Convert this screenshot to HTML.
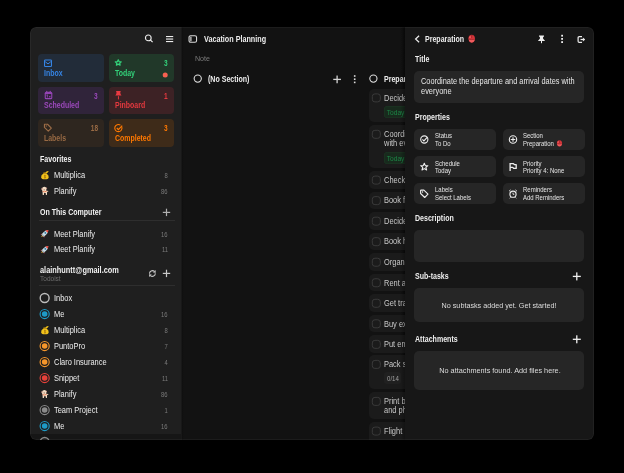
<!DOCTYPE html><html><head><meta charset="utf-8"><style>
html,body{margin:0;padding:0;background:#000;width:624px;height:473px;overflow:hidden}
.t{position:absolute;font-family:"Liberation Sans",sans-serif;line-height:1;white-space:nowrap}
.r{position:absolute}
#wrap{will-change:transform}
#win{position:absolute;left:30px;top:27px;width:564px;height:413px;border-radius:6px;overflow:hidden;background:#121212}
</style></head><body><div id="wrap" style="position:absolute;left:0;top:0;width:624px;height:473px;clip-path:inset(27px 30px 33px 30px round 6px)">

<div class="r" style="left:30.00px;top:27.00px;width:564.00px;height:413.00px;background:#121212;border-radius:6px;overflow:hidden"></div>
<div class="r" style="left:30.00px;top:27.00px;width:150.50px;height:413.00px;background:#1f1f1f;border-radius:0px;border-radius:6px 0 0 6px"></div>
<div class="r" style="left:180.50px;top:27.00px;width:1.50px;height:413.00px;background:#181818;border-radius:0px;"></div>
<div class="r" style="left:182.00px;top:27.00px;width:1.50px;height:413.00px;background:linear-gradient(90deg,#0f0f0f,#121212);border-radius:0px;"></div>
<div class="r" style="left:405.00px;top:27.00px;width:189.00px;height:413.00px;background:#171717;border-radius:0px;border-radius:0 6px 6px 0"></div>
<div class="r" style="left:401.00px;top:27.00px;width:4.00px;height:413.00px;background:linear-gradient(90deg,rgba(0,0,0,0),rgba(0,0,0,0.35));border-radius:0px;"></div>
<svg class="r" style="left:144px;top:34px;overflow:visible" width="11" height="11" viewBox="0.000 0.000 11.000 11.000"><circle cx="4.3" cy="3.9" r="2.85" fill="none" stroke="#eee" stroke-width="1.1"/><line x1="6.3" y1="5.9" x2="8.6" y2="8.2" stroke="#eee" stroke-width="1.2"/></svg>
<svg class="r" style="left:166px;top:35px;overflow:visible" width="9" height="9" viewBox="0.000 0.000 9.000 9.000"><rect x="0" y="1" width="7.2" height="1.1" fill="#eee"/><rect x="0" y="3.5" width="7.2" height="1.1" fill="#eee"/><rect x="0" y="6" width="7.2" height="1.1" fill="#eee"/></svg>
<div class="r" style="left:38.00px;top:54.00px;width:65.50px;height:27.50px;background:#222c39;border-radius:4px;"></div>
<div class="t" style="left:44.20px;top:69.86px;font-size:8.2px;font-weight:700;color:#3584e4;letter-spacing:0px;transform:scaleX(0.85);transform-origin:0 0;">Inbox</div>
<div class="r" style="left:108.50px;top:54.00px;width:65.50px;height:27.50px;background:#213829;border-radius:4px;"></div>
<div class="t" style="left:114.70px;top:69.86px;font-size:8.2px;font-weight:700;color:#33d17a;letter-spacing:0px;transform:scaleX(0.85);transform-origin:0 0;">Today</div>
<div class="t" style="right:456.50px;top:60.06px;font-size:8.2px;font-weight:700;color:#33d17a;letter-spacing:0px;transform:scaleX(0.8);transform-origin:100% 0;">3</div>
<svg class="r" style="left:162px;top:72px;overflow:visible" width="7" height="7" viewBox="-0.700 -0.400 7.000 7.000"><circle cx="2.5" cy="2.5" r="2.5" fill="#f66151"/></svg>
<div class="r" style="left:38.00px;top:86.50px;width:65.50px;height:27.50px;background:#30243a;border-radius:4px;"></div>
<div class="t" style="left:44.20px;top:102.36px;font-size:8.2px;font-weight:700;color:#9a48ba;letter-spacing:0px;transform:scaleX(0.85);transform-origin:0 0;">Scheduled</div>
<div class="t" style="right:526.40px;top:92.56px;font-size:8.2px;font-weight:700;color:#9a48ba;letter-spacing:0px;transform:scaleX(0.8);transform-origin:100% 0;">3</div>
<div class="r" style="left:108.50px;top:86.50px;width:65.50px;height:27.50px;background:#3d2225;border-radius:4px;"></div>
<div class="t" style="left:114.70px;top:102.36px;font-size:8.2px;font-weight:700;color:#e5393f;letter-spacing:0px;transform:scaleX(0.85);transform-origin:0 0;">Pinboard</div>
<div class="t" style="right:456.50px;top:92.56px;font-size:8.2px;font-weight:700;color:#e5393f;letter-spacing:0px;transform:scaleX(0.8);transform-origin:100% 0;">1</div>
<div class="r" style="left:38.00px;top:119.00px;width:65.50px;height:27.50px;background:#2e261f;border-radius:4px;"></div>
<div class="t" style="left:44.20px;top:134.86px;font-size:8.2px;font-weight:700;color:#986a44;letter-spacing:0px;transform:scaleX(0.85);transform-origin:0 0;">Labels</div>
<div class="t" style="right:526.40px;top:125.06px;font-size:8.2px;font-weight:700;color:#986a44;letter-spacing:0px;transform:scaleX(0.8);transform-origin:100% 0;">18</div>
<div class="r" style="left:108.50px;top:119.00px;width:65.50px;height:27.50px;background:#3e2b19;border-radius:4px;"></div>
<div class="t" style="left:114.70px;top:134.86px;font-size:8.2px;font-weight:700;color:#ff7800;letter-spacing:0px;transform:scaleX(0.85);transform-origin:0 0;">Completed</div>
<div class="t" style="right:456.50px;top:125.06px;font-size:8.2px;font-weight:700;color:#ff7800;letter-spacing:0px;transform:scaleX(0.8);transform-origin:100% 0;">3</div>
<svg class="r" style="left:44px;top:59px;overflow:visible" width="9" height="9" viewBox="0.000 -0.500 9.000 9.000"><rect x="0.55" y="0.55" width="6.9" height="6.4" rx="0.8" fill="none" stroke="#3584e4" stroke-width="1.1"/><path d="M1.2 2.2 L4 4.4 L6.8 2.2" fill="none" stroke="#3584e4" stroke-width="1"/></svg>
<svg class="r" style="left:114px;top:58px;overflow:visible" width="10" height="10" viewBox="-0.400 -0.900 10.000 10.000"><path d="M3.85 0.9 L4.75 2.75 L6.8 2.95 L5.25 4.3 L5.7 6.3 L3.85 5.25 L2 6.3 L2.45 4.3 L0.9 2.95 L2.95 2.75 Z" fill="none" stroke="#33d17a" stroke-width="1.25" stroke-linejoin="round"/></svg>
<svg class="r" style="left:44px;top:90px;overflow:visible" width="10" height="11" viewBox="-0.500 -0.800 10.000 11.000"><rect x="0.2" y="0.9" width="7.6" height="7.5" rx="1.5" fill="#9444b4"/><rect x="1.3" y="3.2" width="5.4" height="4.1" rx="0.4" fill="#30243a"/><rect x="1.9" y="3.8" width="1.6" height="0.9" fill="#9444b4"/><rect x="2.4" y="4.5" width="0.8" height="2.2" fill="#9444b4"/><circle cx="5.3" cy="6" r="0.8" fill="#9444b4"/><rect x="1.7" y="0" width="1.1" height="1.6" rx="0.4" fill="#9444b4"/><rect x="5.2" y="0" width="1.1" height="1.6" rx="0.4" fill="#9444b4"/></svg>
<svg class="r" style="left:114px;top:90px;overflow:visible" width="9" height="11" viewBox="-0.900 -0.700 9.000 11.000"><path d="M1.1 0.3 H5.9 L5.4 1.6 Q5.2 3.2 6.6 4.9 H0.4 Q1.8 3.2 1.6 1.6 Z" fill="#ea3a42"/><rect x="3.05" y="5.5" width="0.95" height="3.2" fill="#ea3a42"/></svg>
<svg class="r" style="left:43px;top:123px;overflow:visible" width="11" height="10" viewBox="-0.750 -0.429 11.786 10.714"><path d="M0.8 1.2 V4.3 L4.9 8.3 L8.2 5 L4.1 0.9 H1.1 Z" fill="none" stroke="#9c6c46" stroke-width="1.2" stroke-linejoin="round"/><circle cx="2.7" cy="2.8" r="0.7" fill="#9c6c46"/></svg>
<svg class="r" style="left:114px;top:123px;overflow:visible" width="11" height="11" viewBox="-0.200 -0.800 11.000 11.000"><path d="M7.6 3.2 A3.6 3.6 0 1 1 6.2 1.3" fill="none" stroke="#ff7800" stroke-width="1.1"/><path d="M2.6 4.2 L4.2 5.8 L8 1.8" fill="none" stroke="#ff7800" stroke-width="1.2"/></svg>
<div class="t" style="left:39.60px;top:155.86px;font-size:8.2px;font-weight:700;color:#f2f2f2;letter-spacing:0px;transform:scaleX(0.86);transform-origin:0 0;">Favorites</div>
<svg class="r" style="left:40px;top:170px;overflow:visible" width="11" height="11" viewBox="-0.500 -0.500 11.000 11.000"><path d="M2.9 2.9 Q0.3 4.6 0.6 6.9 Q1 8.8 4.4 8.8 Q7.9 8.8 8.2 6.9 Q8.5 4.6 5.9 2.9 Z" fill="#f1c21b"/><path d="M3.1 3.2 L2.9 2.1 Q4.4 1.7 5.9 2.1 L5.7 3.2 Z" fill="#d9a30e"/><path d="M4.9 2.3 Q5.8 0.1 8.2 0.5 Q7.4 2.1 6.1 2.9 Z" fill="#f1c21b"/><path d="M4.4 4.3 V8 M3.6 5.2 Q4.4 4.6 5.2 5.2 Q3.6 6.2 5.2 7.1 Q4.4 7.7 3.6 7.1" fill="none" stroke="#9a6a0c" stroke-width="0.6"/></svg>
<div class="t" style="left:54.30px;top:171.86px;font-size:8.2px;font-weight:400;color:#eeeeee;letter-spacing:0px;transform:scaleX(0.91);transform-origin:0 0;">Multiplica</div>
<div class="t" style="right:456.00px;top:172.88px;font-size:6.8px;font-weight:400;color:#7a7a7a;letter-spacing:0px;transform:scaleX(0.86);transform-origin:100% 0;">8</div>
<svg class="r" style="left:40px;top:186px;overflow:visible" width="11" height="11" viewBox="-0.500 -0.300 11.000 11.000"><path d="M1.6 2.2 Q2 0.4 4 0.5 Q5.8 0.6 6 2.4 L5.6 4.4 Q7.4 4.2 8.2 4.8 Q7.6 5.6 6.6 5.6 L6.4 8.6 H5.4 L5.2 6.8 H3.6 L3.4 8.6 H2.2 L2 5 Q1.2 4 1.6 2.2 Z" fill="#f2dcc4"/><path d="M1.7 1.2 Q0.6 1.6 0.9 3.6 Q1.4 3.8 2.2 2.6 Z M5.4 0.9 Q6.6 1 6.7 2.8 L5.6 2.4 Z" fill="#d8a08f"/><path d="M3.2 2.6 L4.6 3.6 L3.4 4.2 Z" fill="#8a5a44"/><path d="M2.2 5.1 Q4 6.2 6.2 4.8" fill="none" stroke="#e8744c" stroke-width="0.9"/></svg>
<div class="t" style="left:54.30px;top:187.86px;font-size:8.2px;font-weight:400;color:#eeeeee;letter-spacing:0px;transform:scaleX(0.91);transform-origin:0 0;">Planify</div>
<div class="t" style="right:456.00px;top:188.88px;font-size:6.8px;font-weight:400;color:#7a7a7a;letter-spacing:0px;transform:scaleX(0.86);transform-origin:100% 0;">86</div>
<div class="t" style="left:39.60px;top:208.76px;font-size:8.2px;font-weight:700;color:#f2f2f2;letter-spacing:0px;transform:scaleX(0.86);transform-origin:0 0;">On This Computer</div>
<svg class="r" style="left:161px;top:207px;overflow:visible" width="12" height="12" viewBox="-0.500 -0.400 12.000 12.000"><rect x="1.30" y="4.40" width="7.40" height="1.20" fill="#b0b0b0"/><rect x="4.40" y="1.30" width="1.20" height="7.40" fill="#b0b0b0"/></svg>
<div class="r" style="left:38.50px;top:220.30px;width:136.50px;height:0.80px;background:#2e2e2e;border-radius:0px;"></div>
<svg class="r" style="left:40px;top:228px;overflow:visible" width="11" height="12" viewBox="-0.104 -0.521 11.458 12.500"><g transform="rotate(45 5 5)"><path d="M3.6 7 L2 9 L3.6 8.4 Z M6.4 7 L8 9 L6.4 8.4 Z" fill="#d22f35"/><path d="M4 8 L5 10.4 L6 8 Z" fill="#f7b731"/><path d="M5 0 Q6.9 2 6.9 5.2 L6.7 8.3 H3.3 L3.1 5.2 Q3.1 2 5 0 Z" fill="#c9dde6"/><path d="M5 0 Q6.2 1.1 6.7 2.6 H3.3 Q3.8 1.1 5 0 Z" fill="#e5443b"/><circle cx="5" cy="4.4" r="1" fill="#3b7ea6"/><path d="M3.3 7.2 H6.7 V8.3 H3.3 Z" fill="#9aaeb8"/></g></svg>
<div class="t" style="left:54.30px;top:230.56px;font-size:8.2px;font-weight:400;color:#eeeeee;letter-spacing:0px;transform:scaleX(0.91);transform-origin:0 0;">Meet Planify</div>
<div class="t" style="right:456.00px;top:231.58px;font-size:6.8px;font-weight:400;color:#7a7a7a;letter-spacing:0px;transform:scaleX(0.86);transform-origin:100% 0;">16</div>
<svg class="r" style="left:40px;top:244px;overflow:visible" width="11" height="12" viewBox="-0.104 -0.521 11.458 12.500"><g transform="rotate(45 5 5)"><path d="M3.6 7 L2 9 L3.6 8.4 Z M6.4 7 L8 9 L6.4 8.4 Z" fill="#d22f35"/><path d="M4 8 L5 10.4 L6 8 Z" fill="#f7b731"/><path d="M5 0 Q6.9 2 6.9 5.2 L6.7 8.3 H3.3 L3.1 5.2 Q3.1 2 5 0 Z" fill="#c9dde6"/><path d="M5 0 Q6.2 1.1 6.7 2.6 H3.3 Q3.8 1.1 5 0 Z" fill="#e5443b"/><circle cx="5" cy="4.4" r="1" fill="#3b7ea6"/><path d="M3.3 7.2 H6.7 V8.3 H3.3 Z" fill="#9aaeb8"/></g></svg>
<div class="t" style="left:54.30px;top:246.46px;font-size:8.2px;font-weight:400;color:#eeeeee;letter-spacing:0px;transform:scaleX(0.91);transform-origin:0 0;">Meet Planify</div>
<div class="t" style="right:456.00px;top:247.48px;font-size:6.8px;font-weight:400;color:#7a7a7a;letter-spacing:0px;transform:scaleX(0.86);transform-origin:100% 0;">11</div>
<div class="t" style="left:39.60px;top:266.66px;font-size:8.2px;font-weight:700;color:#f2f2f2;letter-spacing:0px;transform:scaleX(0.9);transform-origin:0 0;">alainhuntt@gmail.com</div>
<div class="t" style="left:39.80px;top:276.28px;font-size:6.8px;font-weight:400;color:#6e6e6e;letter-spacing:0px;transform:scaleX(0.96);transform-origin:0 0;">Todoist</div>
<svg class="r" style="left:148px;top:269px;overflow:visible" width="10" height="10" viewBox="-0.400 -0.500 10.000 10.000"><path d="M1.1 4.3 A2.95 2.95 0 0 1 6 1.9" fill="none" stroke="#c8c8c8" stroke-width="1.05"/><path d="M6.9 3.7 A2.95 2.95 0 0 1 2 6.1" fill="none" stroke="#c8c8c8" stroke-width="1.05"/><path d="M4.6 2.9 L7.4 3.3 L7.1 0.5 Z M3.4 5.1 L0.6 4.7 L0.9 7.5 Z" fill="#c8c8c8"/></svg>
<svg class="r" style="left:161px;top:268px;overflow:visible" width="12" height="12" viewBox="-0.500 -0.400 12.000 12.000"><rect x="1.30" y="4.40" width="7.40" height="1.20" fill="#c8c8c8"/><rect x="4.40" y="1.30" width="1.20" height="7.40" fill="#c8c8c8"/></svg>
<div class="r" style="left:38.50px;top:284.80px;width:136.50px;height:0.80px;background:#2e2e2e;border-radius:0px;"></div>
<svg class="r" style="left:38px;top:292px;overflow:visible" width="14" height="13" viewBox="-0.650 0.000 14.000 13.000"><circle cx="6" cy="6" r="4.45" fill="none" stroke="#bdbdbd" stroke-width="1.4"/></svg>
<div class="t" style="left:54.30px;top:295.36px;font-size:8.2px;font-weight:400;color:#eeeeee;letter-spacing:0px;transform:scaleX(0.91);transform-origin:0 0;">Inbox</div>
<svg class="r" style="left:38px;top:308px;overflow:visible" width="14" height="13" viewBox="-0.650 0.000 14.000 13.000"><circle cx="6" cy="6" r="4.55" fill="none" stroke="#1e9ac6" stroke-width="1.15"/><circle cx="6" cy="6" r="2.8" fill="#1e9ac6"/></svg>
<div class="t" style="left:54.30px;top:311.36px;font-size:8.2px;font-weight:400;color:#eeeeee;letter-spacing:0px;transform:scaleX(0.91);transform-origin:0 0;">Me</div>
<div class="t" style="right:456.00px;top:312.38px;font-size:6.8px;font-weight:400;color:#7a7a7a;letter-spacing:0px;transform:scaleX(0.86);transform-origin:100% 0;">16</div>
<svg class="r" style="left:40px;top:325px;overflow:visible" width="11" height="11" viewBox="-0.500 -0.500 11.000 11.000"><path d="M2.9 2.9 Q0.3 4.6 0.6 6.9 Q1 8.8 4.4 8.8 Q7.9 8.8 8.2 6.9 Q8.5 4.6 5.9 2.9 Z" fill="#f1c21b"/><path d="M3.1 3.2 L2.9 2.1 Q4.4 1.7 5.9 2.1 L5.7 3.2 Z" fill="#d9a30e"/><path d="M4.9 2.3 Q5.8 0.1 8.2 0.5 Q7.4 2.1 6.1 2.9 Z" fill="#f1c21b"/><path d="M4.4 4.3 V8 M3.6 5.2 Q4.4 4.6 5.2 5.2 Q3.6 6.2 5.2 7.1 Q4.4 7.7 3.6 7.1" fill="none" stroke="#9a6a0c" stroke-width="0.6"/></svg>
<div class="t" style="left:54.30px;top:327.36px;font-size:8.2px;font-weight:400;color:#eeeeee;letter-spacing:0px;transform:scaleX(0.91);transform-origin:0 0;">Multiplica</div>
<div class="t" style="right:456.00px;top:328.38px;font-size:6.8px;font-weight:400;color:#7a7a7a;letter-spacing:0px;transform:scaleX(0.86);transform-origin:100% 0;">8</div>
<svg class="r" style="left:38px;top:340px;overflow:visible" width="14" height="13" viewBox="-0.650 0.000 14.000 13.000"><circle cx="6" cy="6" r="4.55" fill="none" stroke="#f5962b" stroke-width="1.15"/><circle cx="6" cy="6" r="2.8" fill="#f5962b"/></svg>
<div class="t" style="left:54.30px;top:343.36px;font-size:8.2px;font-weight:400;color:#eeeeee;letter-spacing:0px;transform:scaleX(0.91);transform-origin:0 0;">PuntoPro</div>
<div class="t" style="right:456.00px;top:344.38px;font-size:6.8px;font-weight:400;color:#7a7a7a;letter-spacing:0px;transform:scaleX(0.86);transform-origin:100% 0;">7</div>
<svg class="r" style="left:38px;top:356px;overflow:visible" width="14" height="13" viewBox="-0.650 0.000 14.000 13.000"><circle cx="6" cy="6" r="4.55" fill="none" stroke="#f5962b" stroke-width="1.15"/><circle cx="6" cy="6" r="2.8" fill="#f5962b"/></svg>
<div class="t" style="left:54.30px;top:359.36px;font-size:8.2px;font-weight:400;color:#eeeeee;letter-spacing:0px;transform:scaleX(0.91);transform-origin:0 0;">Claro Insurance</div>
<div class="t" style="right:456.00px;top:360.38px;font-size:6.8px;font-weight:400;color:#7a7a7a;letter-spacing:0px;transform:scaleX(0.86);transform-origin:100% 0;">4</div>
<svg class="r" style="left:38px;top:372px;overflow:visible" width="14" height="13" viewBox="-0.650 0.000 14.000 13.000"><circle cx="6" cy="6" r="4.55" fill="none" stroke="#e6413a" stroke-width="1.15"/><circle cx="6" cy="6" r="2.8" fill="#e6413a"/></svg>
<div class="t" style="left:54.30px;top:375.36px;font-size:8.2px;font-weight:400;color:#eeeeee;letter-spacing:0px;transform:scaleX(0.91);transform-origin:0 0;">Snippet</div>
<div class="t" style="right:456.00px;top:376.38px;font-size:6.8px;font-weight:400;color:#7a7a7a;letter-spacing:0px;transform:scaleX(0.86);transform-origin:100% 0;">11</div>
<svg class="r" style="left:40px;top:389px;overflow:visible" width="11" height="11" viewBox="-0.500 -0.500 11.000 11.000"><path d="M1.6 2.2 Q2 0.4 4 0.5 Q5.8 0.6 6 2.4 L5.6 4.4 Q7.4 4.2 8.2 4.8 Q7.6 5.6 6.6 5.6 L6.4 8.6 H5.4 L5.2 6.8 H3.6 L3.4 8.6 H2.2 L2 5 Q1.2 4 1.6 2.2 Z" fill="#f2dcc4"/><path d="M1.7 1.2 Q0.6 1.6 0.9 3.6 Q1.4 3.8 2.2 2.6 Z M5.4 0.9 Q6.6 1 6.7 2.8 L5.6 2.4 Z" fill="#d8a08f"/><path d="M3.2 2.6 L4.6 3.6 L3.4 4.2 Z" fill="#8a5a44"/><path d="M2.2 5.1 Q4 6.2 6.2 4.8" fill="none" stroke="#e8744c" stroke-width="0.9"/></svg>
<div class="t" style="left:54.30px;top:391.36px;font-size:8.2px;font-weight:400;color:#eeeeee;letter-spacing:0px;transform:scaleX(0.91);transform-origin:0 0;">Planify</div>
<div class="t" style="right:456.00px;top:392.38px;font-size:6.8px;font-weight:400;color:#7a7a7a;letter-spacing:0px;transform:scaleX(0.86);transform-origin:100% 0;">86</div>
<svg class="r" style="left:38px;top:404px;overflow:visible" width="14" height="13" viewBox="-0.650 0.000 14.000 13.000"><circle cx="6" cy="6" r="4.55" fill="none" stroke="#8a8a8a" stroke-width="1.15"/><circle cx="6" cy="6" r="2.8" fill="#8a8a8a"/></svg>
<div class="t" style="left:54.30px;top:407.36px;font-size:8.2px;font-weight:400;color:#eeeeee;letter-spacing:0px;transform:scaleX(0.91);transform-origin:0 0;">Team Project</div>
<div class="t" style="right:456.00px;top:408.38px;font-size:6.8px;font-weight:400;color:#7a7a7a;letter-spacing:0px;transform:scaleX(0.86);transform-origin:100% 0;">1</div>
<svg class="r" style="left:38px;top:420px;overflow:visible" width="14" height="13" viewBox="-0.650 0.000 14.000 13.000"><circle cx="6" cy="6" r="4.55" fill="none" stroke="#1e9ac6" stroke-width="1.15"/><circle cx="6" cy="6" r="2.8" fill="#1e9ac6"/></svg>
<div class="t" style="left:54.30px;top:423.36px;font-size:8.2px;font-weight:400;color:#eeeeee;letter-spacing:0px;transform:scaleX(0.91);transform-origin:0 0;">Me</div>
<div class="t" style="right:456.00px;top:424.38px;font-size:6.8px;font-weight:400;color:#7a7a7a;letter-spacing:0px;transform:scaleX(0.86);transform-origin:100% 0;">16</div>
<svg class="r" style="left:38px;top:436px;overflow:visible" width="14" height="13" viewBox="-0.650 0.000 14.000 13.000"><circle cx="6" cy="6" r="4.45" fill="none" stroke="#bdbdbd" stroke-width="1.4"/></svg>
<div class="r" style="left:30.00px;top:434.00px;width:150.50px;height:6.00px;background:rgba(0,0,0,0.27);border-radius:0px;border-radius:0 0 0 6px"></div>
<svg class="r" style="left:188px;top:35px;overflow:visible" width="11" height="9" viewBox="-0.500 -0.200 11.000 9.000"><rect x="0.55" y="0.55" width="7.5" height="6.5" rx="1.6" fill="none" stroke="#d8d8d8" stroke-width="1.1"/><rect x="1.8" y="1.5" width="1.2" height="4.6" fill="#d8d8d8"/></svg>
<div class="t" style="left:204.20px;top:36.06px;font-size:8.2px;font-weight:700;color:#eeeeee;letter-spacing:0px;transform:scaleX(0.88);transform-origin:0 0;">Vacation Planning</div>
<div class="t" style="left:194.80px;top:55.15px;font-size:7.8px;font-weight:400;color:#7c7c7c;letter-spacing:0px;transform:scaleX(0.91);transform-origin:0 0;">Note</div>
<svg class="r" style="left:193px;top:74px;overflow:visible" width="11" height="11" viewBox="-0.250 -0.100 11.000 11.000"><circle cx="4.5" cy="4.5" r="3.6" fill="none" stroke="#ddd" stroke-width="1.1"/></svg>
<div class="t" style="left:207.70px;top:76.46px;font-size:8.2px;font-weight:700;color:#eeeeee;letter-spacing:0px;transform:scaleX(0.86);transform-origin:0 0;">(No Section)</div>
<svg class="r" style="left:332px;top:74px;overflow:visible" width="12" height="12" viewBox="-0.100 -0.400 12.000 12.000"><rect x="1.15" y="4.35" width="7.70" height="1.30" fill="#d4d4d4"/><rect x="4.35" y="1.15" width="1.30" height="7.70" fill="#d4d4d4"/></svg>
<svg class="r" style="left:353px;top:75px;overflow:visible" width="5" height="10" viewBox="-0.300 -0.200 5.000 10.000"><rect x="0.6" y="0" width="1.6" height="1.6" fill="#ddd"/><rect x="0.6" y="3.2" width="1.6" height="1.6" fill="#ddd"/><rect x="0.6" y="6.4" width="1.6" height="1.6" fill="#ddd"/></svg>
<svg class="r" style="left:368px;top:74px;overflow:visible" width="11" height="11" viewBox="-0.900 -0.100 11.000 11.000"><circle cx="4.5" cy="4.5" r="3.6" fill="none" stroke="#ddd" stroke-width="1.1"/></svg>
<div class="t" style="left:383.50px;top:76.46px;font-size:8.2px;font-weight:700;color:#eeeeee;letter-spacing:0px;transform:scaleX(0.86);transform-origin:0 0;">Preparation</div>
<div class="r" style="left:368.60px;top:88.80px;width:60.00px;height:33.20px;background:#1b1b1b;border-radius:5px;"></div>
<svg class="r" style="left:371px;top:93px;overflow:visible" width="11" height="11" viewBox="-0.800 -0.400 11.000 11.000"><rect x="0.5" y="0.5" width="8" height="8" rx="2.6" fill="none" stroke="#3a3a3a" stroke-width="1"/></svg>
<div class="t" style="left:383.80px;top:94.66px;font-size:8.2px;font-weight:400;color:#c8c8c8;letter-spacing:0px;transform:scaleX(0.91);transform-origin:0 0;">Decide on the dates</div>
<div class="r" style="left:384.00px;top:105.90px;width:26.00px;height:12.20px;background:#182a1d;border-radius:3.5px;box-shadow:inset 0 0 0 0.6px #1c3824"></div>
<div class="t" style="left:386.80px;top:110.02px;font-size:6.6px;font-weight:400;color:#1c8646;letter-spacing:0px;">Today</div>
<div class="r" style="left:368.60px;top:125.20px;width:60.00px;height:42.60px;background:#1b1b1b;border-radius:5px;"></div>
<svg class="r" style="left:371px;top:129px;overflow:visible" width="11" height="11" viewBox="-0.800 -0.800 11.000 11.000"><rect x="0.5" y="0.5" width="8" height="8" rx="2.6" fill="none" stroke="#3a3a3a" stroke-width="1"/></svg>
<div class="t" style="left:383.80px;top:131.06px;font-size:8.2px;font-weight:400;color:#c8c8c8;letter-spacing:0px;transform:scaleX(0.91);transform-origin:0 0;">Coordinate the departure</div>
<div class="t" style="left:383.80px;top:140.26px;font-size:8.2px;font-weight:400;color:#c8c8c8;letter-spacing:0px;transform:scaleX(0.91);transform-origin:0 0;">with everyone</div>
<div class="r" style="left:384.00px;top:151.50px;width:26.00px;height:12.20px;background:#182a1d;border-radius:3.5px;box-shadow:inset 0 0 0 0.6px #1c3824"></div>
<div class="t" style="left:386.80px;top:155.62px;font-size:6.6px;font-weight:400;color:#1c8646;letter-spacing:0px;">Today</div>
<div class="r" style="left:368.60px;top:171.00px;width:60.00px;height:17.60px;background:#1b1b1b;border-radius:5px;"></div>
<svg class="r" style="left:371px;top:175px;overflow:visible" width="11" height="11" viewBox="-0.800 -0.600 11.000 11.000"><rect x="0.5" y="0.5" width="8" height="8" rx="2.6" fill="none" stroke="#3a3a3a" stroke-width="1"/></svg>
<div class="t" style="left:383.80px;top:176.86px;font-size:8.2px;font-weight:400;color:#c8c8c8;letter-spacing:0px;transform:scaleX(0.91);transform-origin:0 0;">Check</div>
<div class="r" style="left:368.60px;top:191.53px;width:60.00px;height:17.60px;background:#1b1b1b;border-radius:5px;"></div>
<svg class="r" style="left:371px;top:196px;overflow:visible" width="11" height="11" viewBox="-0.800 -0.130 11.000 11.000"><rect x="0.5" y="0.5" width="8" height="8" rx="2.6" fill="none" stroke="#3a3a3a" stroke-width="1"/></svg>
<div class="t" style="left:383.80px;top:197.39px;font-size:8.2px;font-weight:400;color:#c8c8c8;letter-spacing:0px;transform:scaleX(0.91);transform-origin:0 0;">Book flights</div>
<div class="r" style="left:368.60px;top:212.06px;width:60.00px;height:17.60px;background:#1b1b1b;border-radius:5px;"></div>
<svg class="r" style="left:371px;top:216px;overflow:visible" width="11" height="11" viewBox="-0.800 -0.660 11.000 11.000"><rect x="0.5" y="0.5" width="8" height="8" rx="2.6" fill="none" stroke="#3a3a3a" stroke-width="1"/></svg>
<div class="t" style="left:383.80px;top:217.92px;font-size:8.2px;font-weight:400;color:#c8c8c8;letter-spacing:0px;transform:scaleX(0.91);transform-origin:0 0;">Decide</div>
<div class="r" style="left:368.60px;top:232.59px;width:60.00px;height:17.60px;background:#1b1b1b;border-radius:5px;"></div>
<svg class="r" style="left:371px;top:237px;overflow:visible" width="11" height="11" viewBox="-0.800 -0.190 11.000 11.000"><rect x="0.5" y="0.5" width="8" height="8" rx="2.6" fill="none" stroke="#3a3a3a" stroke-width="1"/></svg>
<div class="t" style="left:383.80px;top:238.45px;font-size:8.2px;font-weight:400;color:#c8c8c8;letter-spacing:0px;transform:scaleX(0.91);transform-origin:0 0;">Book hotel</div>
<div class="r" style="left:368.60px;top:253.12px;width:60.00px;height:17.60px;background:#1b1b1b;border-radius:5px;"></div>
<svg class="r" style="left:371px;top:257px;overflow:visible" width="11" height="11" viewBox="-0.800 -0.720 11.000 11.000"><rect x="0.5" y="0.5" width="8" height="8" rx="2.6" fill="none" stroke="#3a3a3a" stroke-width="1"/></svg>
<div class="t" style="left:383.80px;top:258.98px;font-size:8.2px;font-weight:400;color:#c8c8c8;letter-spacing:0px;transform:scaleX(0.91);transform-origin:0 0;">Organize</div>
<div class="r" style="left:368.60px;top:273.65px;width:60.00px;height:17.60px;background:#1b1b1b;border-radius:5px;"></div>
<svg class="r" style="left:371px;top:278px;overflow:visible" width="11" height="11" viewBox="-0.800 -0.250 11.000 11.000"><rect x="0.5" y="0.5" width="8" height="8" rx="2.6" fill="none" stroke="#3a3a3a" stroke-width="1"/></svg>
<div class="t" style="left:383.80px;top:279.51px;font-size:8.2px;font-weight:400;color:#c8c8c8;letter-spacing:0px;transform:scaleX(0.91);transform-origin:0 0;">Rent a car</div>
<div class="r" style="left:368.60px;top:294.18px;width:60.00px;height:17.60px;background:#1b1b1b;border-radius:5px;"></div>
<svg class="r" style="left:371px;top:298px;overflow:visible" width="11" height="11" viewBox="-0.800 -0.780 11.000 11.000"><rect x="0.5" y="0.5" width="8" height="8" rx="2.6" fill="none" stroke="#3a3a3a" stroke-width="1"/></svg>
<div class="t" style="left:383.80px;top:300.04px;font-size:8.2px;font-weight:400;color:#c8c8c8;letter-spacing:0px;transform:scaleX(0.91);transform-origin:0 0;">Get travel</div>
<div class="r" style="left:368.60px;top:314.71px;width:60.00px;height:17.60px;background:#1b1b1b;border-radius:5px;"></div>
<svg class="r" style="left:371px;top:319px;overflow:visible" width="11" height="11" viewBox="-0.800 -0.310 11.000 11.000"><rect x="0.5" y="0.5" width="8" height="8" rx="2.6" fill="none" stroke="#3a3a3a" stroke-width="1"/></svg>
<div class="t" style="left:383.80px;top:320.57px;font-size:8.2px;font-weight:400;color:#c8c8c8;letter-spacing:0px;transform:scaleX(0.91);transform-origin:0 0;">Buy extra</div>
<div class="r" style="left:368.60px;top:335.24px;width:60.00px;height:17.60px;background:#1b1b1b;border-radius:5px;"></div>
<svg class="r" style="left:371px;top:339px;overflow:visible" width="11" height="11" viewBox="-0.800 -0.840 11.000 11.000"><rect x="0.5" y="0.5" width="8" height="8" rx="2.6" fill="none" stroke="#3a3a3a" stroke-width="1"/></svg>
<div class="t" style="left:383.80px;top:341.10px;font-size:8.2px;font-weight:400;color:#c8c8c8;letter-spacing:0px;transform:scaleX(0.91);transform-origin:0 0;">Put emergency</div>
<div class="r" style="left:368.60px;top:355.30px;width:60.00px;height:33.70px;background:#1b1b1b;border-radius:5px;"></div>
<svg class="r" style="left:371px;top:359px;overflow:visible" width="11" height="11" viewBox="-0.800 -0.900 11.000 11.000"><rect x="0.5" y="0.5" width="8" height="8" rx="2.6" fill="none" stroke="#3a3a3a" stroke-width="1"/></svg>
<div class="t" style="left:383.80px;top:361.16px;font-size:8.2px;font-weight:400;color:#c8c8c8;letter-spacing:0px;transform:scaleX(0.91);transform-origin:0 0;">Pack suitcase</div>
<div class="r" style="left:384.00px;top:372.30px;width:17.00px;height:12.00px;background:#202020;border-radius:3px;"></div>
<div class="t" style="left:386.70px;top:376.28px;font-size:6.8px;font-weight:400;color:#a0a0a0;letter-spacing:0px;transform:scaleX(0.9);transform-origin:0 0;">0/14</div>
<div class="r" style="left:368.60px;top:392.30px;width:60.00px;height:26.30px;background:#1b1b1b;border-radius:5px;"></div>
<svg class="r" style="left:371px;top:396px;overflow:visible" width="11" height="11" viewBox="-0.800 -0.900 11.000 11.000"><rect x="0.5" y="0.5" width="8" height="8" rx="2.6" fill="none" stroke="#3a3a3a" stroke-width="1"/></svg>
<div class="t" style="left:383.80px;top:398.16px;font-size:8.2px;font-weight:400;color:#c8c8c8;letter-spacing:0px;transform:scaleX(0.91);transform-origin:0 0;">Print boarding</div>
<div class="t" style="left:383.80px;top:407.36px;font-size:8.2px;font-weight:400;color:#c8c8c8;letter-spacing:0px;transform:scaleX(0.91);transform-origin:0 0;">and photos</div>
<div class="r" style="left:368.60px;top:422.00px;width:60.00px;height:23.00px;background:#1b1b1b;border-radius:5px;"></div>
<svg class="r" style="left:371px;top:426px;overflow:visible" width="11" height="11" viewBox="-0.800 -0.600 11.000 11.000"><rect x="0.5" y="0.5" width="8" height="8" rx="2.6" fill="none" stroke="#3a3a3a" stroke-width="1"/></svg>
<div class="t" style="left:383.80px;top:427.86px;font-size:8.2px;font-weight:400;color:#c8c8c8;letter-spacing:0px;transform:scaleX(0.91);transform-origin:0 0;">Flight</div>
<div class="r" style="left:405.00px;top:27.00px;width:189.00px;height:413.00px;background:#171717;border-radius:0px;border-radius:0 6px 6px 0"></div>
<div class="r" style="left:400.00px;top:27.00px;width:5.00px;height:413.00px;background:linear-gradient(90deg,rgba(0,0,0,0),rgba(0,0,0,0.3));border-radius:0px;"></div>
<svg class="r" style="left:414px;top:35px;overflow:visible" width="8" height="10" viewBox="-0.400 -0.200 8.000 10.000"><path d="M4.7 0.6 L1.2 3.85 L4.7 7.1" fill="none" stroke="#eee" stroke-width="1.2"/></svg>
<div class="t" style="left:424.60px;top:36.16px;font-size:8.2px;font-weight:700;color:#eeeeee;letter-spacing:0px;transform:scaleX(0.86);transform-origin:0 0;">Preparation</div>
<svg class="r" style="left:468px;top:34px;overflow:visible" width="9" height="11" viewBox="-0.171 -0.173 7.714 9.533"><path d="M3 0.5 Q5.6 0.6 5.8 3.6 Q5.8 7.2 3 7.4 Q0.2 7.2 0.2 3.6 Q0.4 0.6 3 0.5 Z" fill="#d5363b"/><path d="M1.2 1.4 Q3 -0.2 4.8 1.4 Q3 0.9 1.2 1.4 Z" fill="#9c2228"/><path d="M0.6 2.6 Q1.2 1.6 2.4 1.8 L2.2 3.2 Q1.2 3.4 0.6 3.2 Z" fill="#ee5a5c"/><path d="M3 1.2 V3.4" stroke="#7e1a1f" stroke-width="0.45"/><path d="M0.5 4.5 Q3 5.1 5.5 4.5 L5.3 5.6 Q4.6 7 3 7.1 Q1.4 7 0.7 5.6 Z" fill="#f05c5e"/><path d="M0.4 4.4 Q3 5 5.6 4.4" fill="none" stroke="#8a1e22" stroke-width="0.45"/></svg>
<svg class="r" style="left:537px;top:35px;overflow:visible" width="10" height="10" viewBox="-0.500 -0.200 10.000 10.000"><path d="M1.5 0.2 H6.5 V1.2 L5.6 1.8 V3.6 L7.3 5.2 V5.8 H0.7 V5.2 L2.4 3.6 V1.8 L1.5 1.2 Z" fill="#eee"/><rect x="3.5" y="5.6" width="1" height="2.4" fill="#eee"/></svg>
<svg class="r" style="left:560px;top:34px;overflow:visible" width="5" height="10" viewBox="-0.800 -0.800 5.000 10.000"><rect x="0.4" y="0" width="1.8" height="1.8" fill="#eee"/><rect x="0.4" y="3.2" width="1.8" height="1.8" fill="#eee"/><rect x="0.4" y="6.4" width="1.8" height="1.8" fill="#eee"/></svg>
<svg class="r" style="left:577px;top:36px;overflow:visible" width="10" height="8" viewBox="-0.500 0.000 10.000 8.000"><path d="M4.5 0.6 H1.8 Q0.6 0.6 0.6 1.8 V5.2 Q0.6 6.4 1.8 6.4 H4.5" fill="none" stroke="#eee" stroke-width="1.2"/><path d="M3 3.5 H7" stroke="#eee" stroke-width="1.2"/><path d="M5.4 1.6 L7.6 3.5 L5.4 5.4 Z" fill="#eee"/></svg>
<div class="t" style="left:414.70px;top:55.96px;font-size:8.2px;font-weight:700;color:#eeeeee;letter-spacing:0px;transform:scaleX(0.86);transform-origin:0 0;">Title</div>
<div class="r" style="left:414.30px;top:70.60px;width:170.20px;height:32.70px;background:#262626;border-radius:5px;"></div>
<div class="t" style="left:420.80px;top:78.46px;font-size:8.2px;font-weight:400;color:#e6e6e6;letter-spacing:0px;transform:scaleX(0.9);transform-origin:0 0;">Coordinate the departure and arrival dates with</div>
<div class="t" style="left:420.80px;top:87.66px;font-size:8.2px;font-weight:400;color:#e6e6e6;letter-spacing:0px;transform:scaleX(0.91);transform-origin:0 0;">everyone</div>
<div class="t" style="left:414.70px;top:114.46px;font-size:8.2px;font-weight:700;color:#eeeeee;letter-spacing:0px;transform:scaleX(0.86);transform-origin:0 0;">Properties</div>
<div class="r" style="left:414.30px;top:129.00px;width:81.50px;height:20.60px;background:#262626;border-radius:5px;"></div>
<svg class="r" style="left:419px;top:135px;overflow:visible" width="11" height="10" viewBox="-0.800 0.000 11.000 10.000"><circle cx="4.5" cy="4.5" r="3.6" fill="none" stroke="#eee" stroke-width="1.1"/><path d="M2.6 4.4 L4.1 5.9 L7.6 2.2" fill="none" stroke="#eee" stroke-width="1.1"/></svg>
<div class="t" style="left:434.50px;top:133.28px;font-size:6.8px;font-weight:400;color:#e6e6e6;letter-spacing:0px;transform:scaleX(0.88);transform-origin:0 0;">Status</div>
<div class="t" style="left:434.50px;top:140.88px;font-size:6.8px;font-weight:400;color:#e6e6e6;letter-spacing:0px;transform:scaleX(0.88);transform-origin:0 0;">To Do</div>
<div class="r" style="left:503.00px;top:129.00px;width:81.50px;height:20.60px;background:#262626;border-radius:5px;"></div>
<svg class="r" style="left:508px;top:135px;overflow:visible" width="11" height="10" viewBox="-0.500 0.000 11.000 10.000"><circle cx="4.5" cy="4.5" r="3.7" fill="none" stroke="#eee" stroke-width="1.1"/><path d="M2.2 4.5 H6.8 M4.5 2.2 V6.8" stroke="#eee" stroke-width="1.1"/></svg>
<div class="t" style="left:523.20px;top:133.28px;font-size:6.8px;font-weight:400;color:#e6e6e6;letter-spacing:0px;transform:scaleX(0.88);transform-origin:0 0;">Section</div>
<div class="t" style="left:523.20px;top:140.88px;font-size:6.8px;font-weight:400;color:#e6e6e6;letter-spacing:0px;transform:scaleX(0.88);transform-origin:0 0;">Preparation</div>
<div class="r" style="left:414.30px;top:156.40px;width:81.50px;height:20.60px;background:#262626;border-radius:5px;"></div>
<svg class="r" style="left:419px;top:162px;overflow:visible" width="11" height="11" viewBox="-0.800 -0.400 11.000 11.000"><path d="M4.5 0.8 L5.5 3.2 L8.1 3.3 L6.1 5 L6.8 7.6 L4.5 6.2 L2.2 7.6 L2.9 5 L0.9 3.3 L3.5 3.2 Z" fill="none" stroke="#eee" stroke-width="1.1" stroke-linejoin="round"/></svg>
<div class="t" style="left:434.50px;top:160.68px;font-size:6.8px;font-weight:400;color:#e6e6e6;letter-spacing:0px;transform:scaleX(0.88);transform-origin:0 0;">Schedule</div>
<div class="t" style="left:434.50px;top:168.28px;font-size:6.8px;font-weight:400;color:#e6e6e6;letter-spacing:0px;transform:scaleX(0.88);transform-origin:0 0;">Today</div>
<div class="r" style="left:503.00px;top:156.40px;width:81.50px;height:20.60px;background:#262626;border-radius:5px;"></div>
<svg class="r" style="left:508px;top:162px;overflow:visible" width="11" height="11" viewBox="-0.500 -0.400 11.000 11.000"><path d="M1.6 0.6 V8.6" stroke="#eee" stroke-width="1.3"/><path d="M1.6 1.2 H5 L5.8 2.3 H7.7 V6 H5.1 L4.3 4.9 H1.6" fill="none" stroke="#eee" stroke-width="1.3" stroke-linejoin="round"/></svg>
<div class="t" style="left:523.20px;top:160.68px;font-size:6.8px;font-weight:400;color:#e6e6e6;letter-spacing:0px;transform:scaleX(0.88);transform-origin:0 0;">Priority</div>
<div class="t" style="left:523.20px;top:168.28px;font-size:6.8px;font-weight:400;color:#e6e6e6;letter-spacing:0px;transform:scaleX(0.88);transform-origin:0 0;">Priority 4: None</div>
<div class="r" style="left:414.30px;top:183.20px;width:81.50px;height:20.60px;background:#262626;border-radius:5px;"></div>
<svg class="r" style="left:419px;top:189px;overflow:visible" width="11" height="11" viewBox="-0.800 -0.200 11.000 11.000"><path d="M0.8 1.2 V4.3 L4.9 8.3 L8.2 5 L4.1 0.9 H1.1 Z" fill="none" stroke="#eee" stroke-width="1.1" stroke-linejoin="round"/><circle cx="2.7" cy="2.8" r="0.75" fill="#eee"/></svg>
<div class="t" style="left:434.50px;top:187.48px;font-size:6.8px;font-weight:400;color:#e6e6e6;letter-spacing:0px;transform:scaleX(0.88);transform-origin:0 0;">Labels</div>
<div class="t" style="left:434.50px;top:195.08px;font-size:6.8px;font-weight:400;color:#e6e6e6;letter-spacing:0px;transform:scaleX(0.88);transform-origin:0 0;">Select Labels</div>
<div class="r" style="left:503.00px;top:183.20px;width:81.50px;height:20.60px;background:#262626;border-radius:5px;"></div>
<svg class="r" style="left:508px;top:189px;overflow:visible" width="11" height="11" viewBox="-0.500 -0.200 11.000 11.000"><circle cx="4.5" cy="5" r="3.1" fill="none" stroke="#eee" stroke-width="1.1"/><path d="M4.5 3.4 V5.1 H5.8" fill="none" stroke="#eee" stroke-width="0.9"/><path d="M0.6 2 L2 0.7 M8.4 2 L7 0.7 M2 8.3 L1.2 9 M7 8.3 L7.8 9" stroke="#eee" stroke-width="1"/></svg>
<div class="t" style="left:523.20px;top:187.48px;font-size:6.8px;font-weight:400;color:#e6e6e6;letter-spacing:0px;transform:scaleX(0.88);transform-origin:0 0;">Reminders</div>
<div class="t" style="left:523.20px;top:195.08px;font-size:6.8px;font-weight:400;color:#e6e6e6;letter-spacing:0px;transform:scaleX(0.88);transform-origin:0 0;">Add Reminders</div>
<svg class="r" style="left:556px;top:139px;overflow:visible" width="8" height="9" viewBox="-0.750 -0.632 8.571 9.486"><path d="M3 0.5 Q5.6 0.6 5.8 3.6 Q5.8 7.2 3 7.4 Q0.2 7.2 0.2 3.6 Q0.4 0.6 3 0.5 Z" fill="#d5363b"/><path d="M1.2 1.4 Q3 -0.2 4.8 1.4 Q3 0.9 1.2 1.4 Z" fill="#9c2228"/><path d="M0.6 2.6 Q1.2 1.6 2.4 1.8 L2.2 3.2 Q1.2 3.4 0.6 3.2 Z" fill="#ee5a5c"/><path d="M3 1.2 V3.4" stroke="#7e1a1f" stroke-width="0.45"/><path d="M0.5 4.5 Q3 5.1 5.5 4.5 L5.3 5.6 Q4.6 7 3 7.1 Q1.4 7 0.7 5.6 Z" fill="#f05c5e"/><path d="M0.4 4.4 Q3 5 5.6 4.4" fill="none" stroke="#8a1e22" stroke-width="0.45"/></svg>
<div class="t" style="left:414.70px;top:215.36px;font-size:8.2px;font-weight:700;color:#eeeeee;letter-spacing:0px;transform:scaleX(0.86);transform-origin:0 0;">Description</div>
<div class="r" style="left:414.30px;top:230.30px;width:170.00px;height:31.80px;background:#262626;border-radius:5px;"></div>
<div class="t" style="left:414.50px;top:273.16px;font-size:8.2px;font-weight:700;color:#eeeeee;letter-spacing:0px;transform:scaleX(0.86);transform-origin:0 0;">Sub-tasks</div>
<svg class="r" style="left:571px;top:271px;overflow:visible" width="12" height="12" viewBox="-0.800 -0.400 12.000 12.000"><rect x="1.00" y="4.35" width="8.00" height="1.30" fill="#f0f0f0"/><rect x="4.35" y="1.00" width="1.30" height="8.00" fill="#f0f0f0"/></svg>
<div class="r" style="left:414.30px;top:288.10px;width:170.00px;height:33.50px;background:#262626;border-radius:5px;"></div>
<div class="t" style="left:299.00px;width:400px;text-align:center;top:301.81px;font-size:8.0px;font-weight:400;color:#dddddd;letter-spacing:0px;transform:scaleX(0.9);transform-origin:50% 0;">No subtasks added yet. Get started!</div>
<div class="t" style="left:414.50px;top:336.26px;font-size:8.2px;font-weight:700;color:#eeeeee;letter-spacing:0px;transform:scaleX(0.86);transform-origin:0 0;">Attachments</div>
<svg class="r" style="left:571px;top:334px;overflow:visible" width="12" height="12" viewBox="-0.800 -0.300 12.000 12.000"><rect x="1.00" y="4.35" width="8.00" height="1.30" fill="#f0f0f0"/><rect x="4.35" y="1.00" width="1.30" height="8.00" fill="#f0f0f0"/></svg>
<div class="r" style="left:414.30px;top:351.30px;width:170.00px;height:38.40px;background:#262626;border-radius:5px;"></div>
<div class="t" style="left:299.50px;width:400px;text-align:center;top:367.21px;font-size:8.0px;font-weight:400;color:#dddddd;letter-spacing:0px;transform:scaleX(0.91);transform-origin:50% 0;">No attachments found. Add files here.</div>
<div class="r" style="left:30.00px;top:27.00px;width:564.00px;height:413.00px;background:transparent;border-radius:6px;box-shadow:inset 0 0 0 1px rgba(255,255,255,0.045)"></div>
</div></body></html>
